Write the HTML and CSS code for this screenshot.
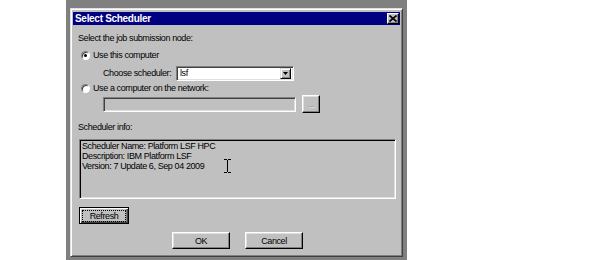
FILE: index.html
```html
<!DOCTYPE html>
<html>
<head>
<meta charset="utf-8">
<link rel="stylesheet" href="styles.css">
</head>
<body>
<div class="desk">
  <div class="dialog">
    <div class="titlebar">
      <span class="title">Select Scheduler</span>
      <span class="close"><svg width="8" height="7" viewBox="0 0 8 7"><path d="M0.5 0.5L7.5 6.5M7.5 0.5L0.5 6.5" stroke="#000" stroke-width="1.6"/></svg></span>
    </div>
    <div class="body">
      <div class="line r1">Select the job submission node:</div>
      <div class="radio-row r2"><span class="radio checked"></span><span class="line">Use this computer</span></div>
      <div class="sched-row">
        <span class="line field-label">Choose scheduler:</span>
        <div class="select">
          <span class="select-text">lsf</span>
          <span class="drop"><svg width="5" height="3" viewBox="0 0 5 3"><path d="M0 0h5L2.5 3z" fill="#000"/></svg></span>
        </div>
      </div>
      <div class="radio-row r4"><span class="radio"></span><span class="line">Use a computer on the network:</span></div>
      <div class="net-row">
        <div class="input"></div>
        <div class="btn browse">...</div>
      </div>
      <div class="line r6">Scheduler info:</div>
      <div class="info">
        <div>Scheduler Name: Platform LSF HPC</div>
        <div>Description: IBM Platform LSF</div>
        <div>Version: 7 Update 6, Sep 04 2009</div>
        <svg class="ibeam" width="7" height="14" viewBox="0 0 7 14"><path d="M0 0.5h3M4 0.5h3M3.5 1v12M0 13.5h3M4 13.5h3" stroke="#000" stroke-width="1"/></svg>
      </div>
      <div class="refresh-row"><div class="btn default"><span class="focus">Refresh</span></div></div>
      <div class="actions">
        <div class="btn action">OK</div>
        <div class="btn action">Cancel</div>
      </div>
    </div>
  </div>
</div>
</body>
</html>
```

FILE: styles.css
```css
html, body {
  margin: 0;
  padding: 0;
  background: #ffffff;
}
body {
  width: 600px;
  height: 260px;
  overflow: hidden;
  font-family: "Liberation Sans", Arial, sans-serif;
  font-size: 9px;
  letter-spacing: -0.4px;
  color: #000;
}
.desk {
  margin-left: 66px;
  width: 333px;
  height: 252px;
  padding: 8px 4px 0 4px;
  background: #808080;
}
.dialog {
  width: 327px;
  padding: 3px 2px 2px 2px;
  background: #c0c0c0;
  border: 1px solid;
  border-color: #dfdfdf #404040 #404040 #dfdfdf;
  box-shadow: inset 1px 1px #ffffff, inset -1px -1px #808080;
}
.titlebar {
  height: 13px;
  background: #000080;
  display: flex;
  align-items: center;
  justify-content: space-between;
  padding: 0 1px 0 2px;
}
.title {
  color: #fff;
  font-weight: bold;
  font-size: 10px;
  letter-spacing: -0.3px;
  line-height: 13px;
}
.close {
  width: 12px;
  height: 11px;
  box-sizing: border-box;
  background: #c0c0c0;
  border: 1px solid;
  border-color: #fff #000 #000 #fff;
  box-shadow: inset -1px -1px #808080;
  display: flex;
  align-items: center;
  justify-content: center;
}
.close svg { display: block; }
.body {
  padding: 0 5px 5px 5px;
  display: flex;
  flex-direction: column;
}
.line {
  line-height: 12px;
  height: 12px;
  white-space: nowrap;
}
.r1 { margin-top: 7px; }
.radio-row {
  display: flex;
  align-items: center;
  height: 12px;
}
.r2 { margin-top: 5px; }
.r4 { margin-top: 1px; }
.radio {
  width: 9px;
  height: 9px;
  box-sizing: border-box;
  margin-left: 3px;
  margin-right: 3px;
  border-radius: 50%;
  background: #fff;
  border: 1px solid;
  border-color: #808080 #fff #fff #808080;
  box-shadow: inset 1px 1px #404040;
  position: relative;
}
.radio.checked::after {
  content: "";
  position: absolute;
  left: 2px;
  top: 2px;
  width: 3px;
  height: 3px;
  border-radius: 50%;
  background: #000;
}
.sched-row {
  display: flex;
  align-items: flex-start;
  margin-top: 5px;
  height: 15px;
  padding-left: 25px;
}
.field-label { width: 73px; padding-top: 1px; }
.select {
  width: 118px;
  height: 15px;
  box-sizing: border-box;
  background: #fff;
  border: 1px solid;
  border-color: #808080 #fff #fff #808080;
  box-shadow: inset 1px 1px #404040, inset -1px -1px #dfdfdf;
  padding: 2px;
  display: flex;
  align-items: center;
  justify-content: space-between;
}
.select-text {
  line-height: 11px;
  padding-left: 1px;
}
.drop {
  width: 11px;
  height: 11px;
  box-sizing: border-box;
  background: #c0c0c0;
  border: 1px solid;
  border-color: #dfdfdf #000 #000 #dfdfdf;
  box-shadow: inset 1px 1px #fff, inset -1px -1px #808080;
  display: flex;
  align-items: center;
  justify-content: center;
}
.drop svg { display: block; }
.net-row {
  display: flex;
  align-items: flex-start;
  margin-top: 1px;
  height: 18px;
  padding-left: 25px;
}
.input {
  margin-top: 2px;
  width: 193px;
  height: 15px;
  box-sizing: border-box;
  background: #c0c0c0;
  border: 1px solid;
  border-color: #808080 #fff #fff #808080;
  box-shadow: inset 1px 1px #404040, inset -1px -1px #dfdfdf;
}
.btn {
  box-sizing: border-box;
  background: #c0c0c0;
  border: 1px solid;
  border-color: #fff #000 #000 #fff;
  box-shadow: inset -1px -1px #808080, inset 1px 1px #dfdfdf;
  display: flex;
  align-items: center;
  justify-content: center;
  line-height: 12px;
}
.browse {
  margin-left: 6px;
  width: 18px;
  height: 18px;
  color: #808080;
  text-shadow: 1px 1px #fff;
  align-items: flex-end;
  padding-bottom: 3px;
  font-size: 8px;
  line-height: 8px;
  letter-spacing: 0;
}
.r6 { margin-top: 8px; }
.info {
  position: relative;
  margin-top: 6px;
  margin-left: 1px;
  width: 317px;
  height: 60px;
  box-sizing: border-box;
  border: 1px solid;
  border-color: #808080 #fff #fff #808080;
  box-shadow: inset 1px 1px #000, inset -1px -1px #dfdfdf;
  padding: 1px 2px 0 2px;
  line-height: 10px;
}
.ibeam {
  position: absolute;
  left: 144px;
  top: 19px;
}
.refresh-row {
  margin-top: 8px;
  padding-left: 1px;
  display: flex;
}
.btn.default {
  width: 50px;
  height: 17px;
  border: 1px solid #000;
  box-shadow: inset 1px 1px #fff, inset -1px -1px #404040, inset -2px -2px #808080;
}
.focus {
  display: block;
  width: 44px;
  height: 12px;
  box-sizing: border-box;
  border: 1px dotted #000;
  line-height: 10px;
  text-align: center;
}
.actions {
  margin-top: 8px;
  display: flex;
  gap: 15px;
  padding-left: 94px;
}
.action {
  width: 58px;
  height: 17px;
}
```
